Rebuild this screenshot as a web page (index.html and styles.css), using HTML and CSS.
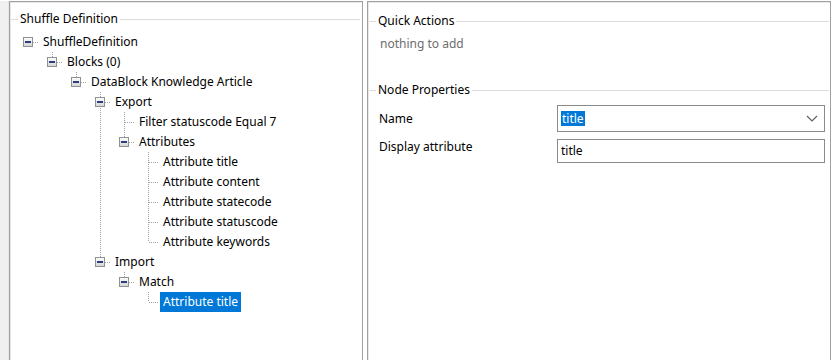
FILE: index.html
```html
<!DOCTYPE html>
<html lang="en">
<head>
    <meta charset="UTF-8">
    <meta name="viewport" content="width=device-width, initial-scale=1.0">
    <title>Shuffle Definition</title>
    <link rel="stylesheet" href="styles.css">
</head>
<body>
    <div class="window">
        <div class="side-strip"></div>

        <div class="panel panel-left">
            <div class="group-header">
                <span class="group-line-start"></span>
                <span class="group-title">Shuffle Definition</span>
                <span class="group-line"></span>
            </div>
            <ul class="tree">
                <li class="root">
                    <div class="node"><span class="expander"></span><span class="label">ShuffleDefinition</span></div>
                    <ul>
                        <li>
                            <div class="node"><span class="expander"></span><span class="label">Blocks (0)</span></div>
                            <ul>
                                <li>
                                    <div class="node"><span class="expander"></span><span class="label">DataBlock Knowledge Article</span></div>
                                    <ul>
                                        <li>
                                            <div class="node"><span class="expander"></span><span class="label">Export</span></div>
                                            <ul>
                                                <li><div class="node"><span class="label">Filter statuscode Equal 7</span></div></li>
                                                <li>
                                                    <div class="node"><span class="expander"></span><span class="label">Attributes</span></div>
                                                    <ul>
                                                        <li><div class="node"><span class="label">Attribute title</span></div></li>
                                                        <li><div class="node"><span class="label">Attribute content</span></div></li>
                                                        <li><div class="node"><span class="label">Attribute statecode</span></div></li>
                                                        <li><div class="node"><span class="label">Attribute statuscode</span></div></li>
                                                        <li><div class="node"><span class="label">Attribute keywords</span></div></li>
                                                    </ul>
                                                </li>
                                            </ul>
                                        </li>
                                        <li>
                                            <div class="node"><span class="expander"></span><span class="label">Import</span></div>
                                            <ul>
                                                <li>
                                                    <div class="node"><span class="expander"></span><span class="label">Match</span></div>
                                                    <ul>
                                                        <li><div class="node"><span class="label selected">Attribute title</span></div></li>
                                                    </ul>
                                                </li>
                                            </ul>
                                        </li>
                                    </ul>
                                </li>
                            </ul>
                        </li>
                    </ul>
                </li>
            </ul>
        </div>

        <div class="panel panel-right">
            <div class="group-header">
                <span class="group-line-start"></span>
                <span class="group-title">Quick Actions</span>
                <span class="group-line"></span>
            </div>
            <div class="hint">nothing to add</div>

            <div class="group-header group-props">
                <span class="group-line-start"></span>
                <span class="group-title">Node Properties</span>
                <span class="group-line"></span>
            </div>
            <div class="props">
                <div class="prop-label prop-label-combo">Name</div>
                <div class="combo">
                    <span class="combo-value">title</span>
                    <svg class="chevron" width="12" height="7" viewBox="0 0 12 7">
                        <path d="M1 1 L6 6 L11 1" fill="none" stroke="#5f5f5f" stroke-width="1.2"/>
                    </svg>
                </div>
                <div class="prop-label">Display attribute</div>
                <div class="textbox">title</div>
            </div>
        </div>
    </div>
</body>
</html>
```

FILE: styles.css
```css
body {
    margin: 0;
    background-color: #fff;
    font-family: "Noto Sans", "Segoe UI", Arial, sans-serif;
    font-size: 12px;
    color: #000;
    overflow: hidden;
}
.window {
    display: flex;
    height: 360px;
    padding-top: 1px;
    box-sizing: border-box;
}
.side-strip {
    width: 9px;
    background-color: #f0f0f0;
    border-right: 1px solid #e6e6e6;
    box-sizing: border-box;
}
.panel {
    border: 1px solid #a0a0a0;
    border-bottom: none;
    box-shadow: inset 1px 1px 0 #e8e8e8;
    background-color: #fff;
    box-sizing: border-box;
}
.panel-left {
    width: 354px;
    padding: 9px 2px 0 1px;
}
.panel-right {
    width: 464px;
    margin-left: 4px;
    padding: 11px 1px 0 1px;
}

/* group box headers */
.group-header {
    display: flex;
    align-items: center;
    height: 16px;
}
.group-line-start {
    width: 7px;
    border-top: 1px solid #dcdcdc;
}
.group-title {
    padding: 0 2px;
    line-height: 16px;
}
.group-line {
    flex: 1;
    border-top: 1px solid #dcdcdc;
}
.group-props {
    margin-top: 30px;
}

/* tree */
.tree, .tree ul {
    list-style: none;
    margin: 0;
    padding: 0;
}
.tree {
    margin-top: 5px;
    padding-left: 7px;
}
.tree ul {
    padding-left: 24px;
}
.tree li {
    position: relative;
}
.tree ul > li::before {
    content: "";
    position: absolute;
    left: 10px;
    top: 0;
    width: 1px;
    height: 100%;
    background-image: linear-gradient(to bottom, #a0a0a0 50%, transparent 50%);
    background-size: 1px 2px;
}
.tree ul > li:last-child::before {
    height: 10px;
}
.node {
    position: relative;
    display: flex;
    align-items: center;
    height: 20px;
    padding-left: 22px;
}
.node::before {
    content: "";
    position: absolute;
    left: 11px;
    top: 10px;
    width: 10px;
    height: 1px;
    background-image: linear-gradient(to right, #a0a0a0 50%, transparent 50%);
    background-size: 2px 1px;
}
.expander {
    position: absolute;
    left: 5px;
    top: 5px;
    width: 10px;
    height: 10px;
    border: 1px solid #919191;
    box-sizing: border-box;
    background: linear-gradient(to bottom, #fcfcfc, #d6d6d6);
    z-index: 1;
}
.expander::after {
    content: "";
    position: absolute;
    left: 1px;
    top: 3px;
    width: 6px;
    height: 2px;
    background-color: #25407a;
}
.label {
    padding: 0 3px 0 3px;
    line-height: 20px;
    white-space: nowrap;
}
.label.selected {
    background-color: #0078d7;
    color: #fff;
    line-height: 20px;
    margin-top: -1px;
}

/* right side */
.hint {
    color: #6d6d6d;
    padding-left: 11px;
    margin-top: 7px;
    line-height: 16px;
}
.props {
    display: grid;
    grid-template-columns: 178px 268px;
    row-gap: 7px;
    margin-top: 7px;
    padding-left: 10px;
}
.prop-label {
    line-height: 16px;
}
.prop-label-combo {
    align-self: center;
}
.combo {
    display: flex;
    align-items: center;
    justify-content: space-between;
    height: 27px;
    border: 1px solid #8a8a8a;
    box-sizing: border-box;
    padding: 0 6px 0 3px;
}
.combo-value {
    background-color: #0078d7;
    color: #fff;
    line-height: 15px;
    padding: 0 1px;
}
.textbox {
    height: 24px;
    border: 1px solid #8a8a8a;
    box-sizing: border-box;
    padding: 0 3px;
    line-height: 22px;
}
```
